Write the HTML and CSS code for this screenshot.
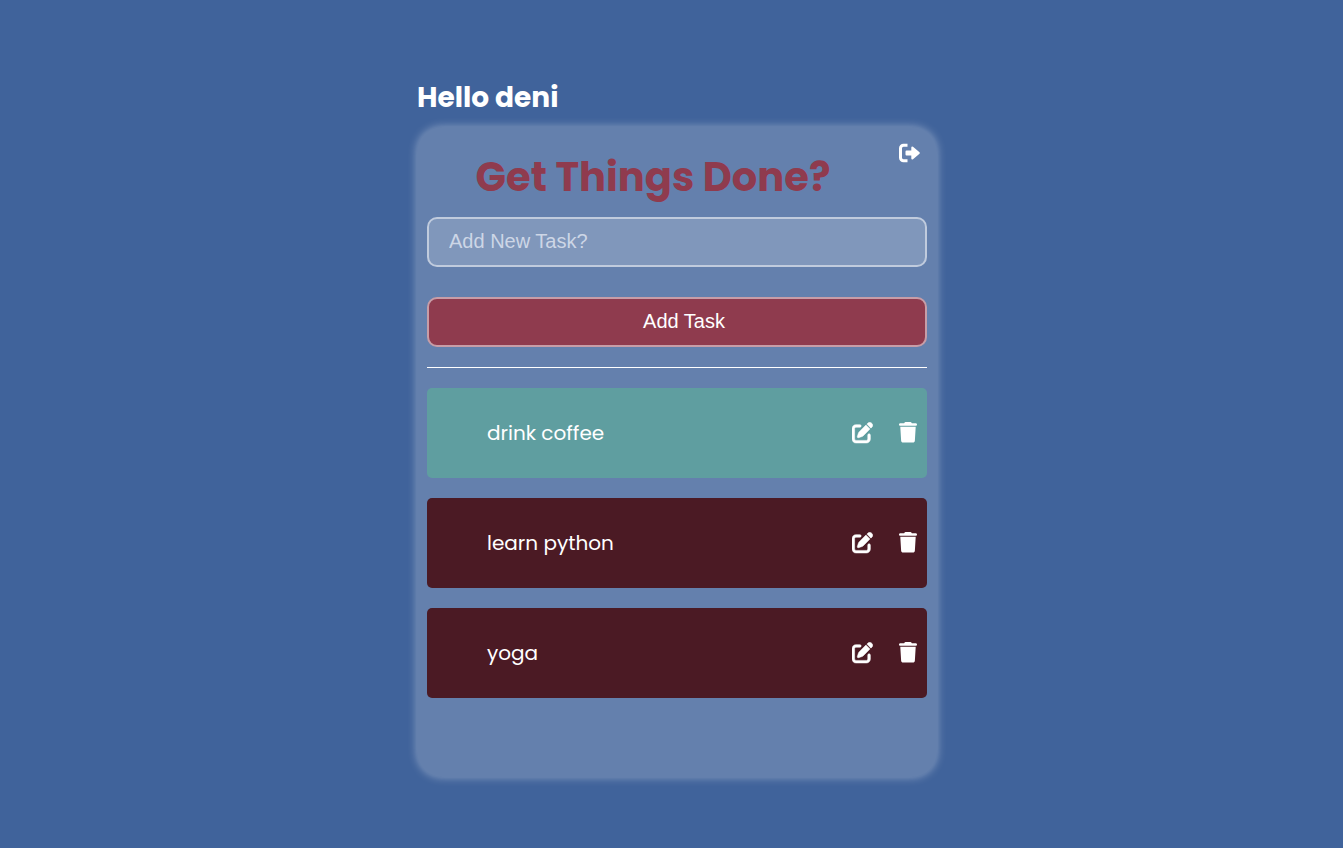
FILE: index.html
```html
<!DOCTYPE html>
<html lang="en">
<head>
<meta charset="utf-8">
<meta name="viewport" content="width=device-width, initial-scale=1">
<title>Get Things Done?</title>
<link rel="stylesheet" href="styles.css">
</head>
<body>
<svg class="sprite" aria-hidden="true">
  <symbol id="logout" viewBox="0 0 22 20">
    <path d="M8.500 2.300H4.500A3 3 0 0 0 1.500 5.300V14.700A3 3 0 0 0 4.500 17.700H8.500" fill="none" stroke="currentColor" stroke-width="3"/>
    <path d="M7.500 7.500H12.300V4.600Q12.500 3 14 3.800L20.500 9.300Q21.200 10 20.500 10.700L14 16.200Q12.500 17 12.300 15.400V12.500H7.500Q6.500 12.500 6.500 11.600V8.400Q6.500 7.500 7.500 7.500Z" fill="currentColor"/>
  </symbol>
  <symbol id="edit" viewBox="0 0 512 512" preserveAspectRatio="xMidYMin meet">
    <path fill="currentColor" d="M471.600 21.700c-21.900-21.900-57.300-21.900-79.200 0L362.300 51.700l97.900 97.900 30.100-30.100c21.900-21.900 21.900-57.300 0-79.200L471.600 21.700zm-299.200 220c-6.100 6.100-10.800 13.600-13.500 21.900l-29.600 88.800c-2.900 8.600-.6 18.100 5.800 24.600s15.900 8.700 24.600 5.800l88.800-29.600c8.200-2.700 15.700-7.400 21.900-13.500L437.700 172.300 339.700 74.300 172.400 241.700zM96 64C43 64 0 107 0 160V416c0 53 43 96 96 96H352c53 0 96-43 96-96V320c0-17.700-14.300-32-32-32s-32 14.300-32 32v96c0 17.700-14.300 32-32 32H96c-17.700 0-32-14.300-32-32V160c0-17.700 14.300-32 32-32h96c17.700 0 32-14.300 32-32s-14.300-32-32-32H96z" stroke="currentColor" stroke-width="12"/>
  </symbol>
  <symbol id="trash" viewBox="0 0 448 512" preserveAspectRatio="xMidYMin meet">
    <path fill="currentColor" d="M135.200 17.700L128 32H32C14.300 32 0 46.300 0 64S14.300 96 32 96H416c17.700 0 32-14.300 32-32s-14.300-32-32-32H320l-7.200-14.300C307.400 6.800 296.300 0 284.200 0H163.800c-12.100 0-23.200 6.800-28.600 17.700zM32 120L53.200 467c1.600 25.300 22.600 45 47.900 45H346.900c25.300 0 46.300-19.700 47.900-45L416 120H32z"/>
  </symbol>
</svg>
<main class="page">
  <h2 class="greeting">Hello deni</h2>
  <section class="card">
    <header class="card-header">
      <h1 class="title">Get Things Done?</h1>
      <button class="icon-button logout" type="button" aria-label="Log out"><svg class="icon-logout"><use href="#logout"/></svg></button>
    </header>
    <form class="task-form">
      <input class="field" type="text" placeholder="Add New Task?" aria-label="Add New Task?">
      <button class="submit" type="button">Add Task</button>
    </form>
    <ul class="tasks">
      <li class="task task-done">
        <span class="task-name">drink coffee</span>
        <button class="icon-button" type="button" aria-label="Edit drink coffee"><svg class="icon-edit"><use href="#edit"/></svg></button>
        <button class="icon-button" type="button" aria-label="Delete drink coffee"><svg class="icon-trash"><use href="#trash"/></svg></button>
      </li>
      <li class="task">
        <span class="task-name">learn python</span>
        <button class="icon-button" type="button" aria-label="Edit learn python"><svg class="icon-edit"><use href="#edit"/></svg></button>
        <button class="icon-button" type="button" aria-label="Delete learn python"><svg class="icon-trash"><use href="#trash"/></svg></button>
      </li>
      <li class="task">
        <span class="task-name">yoga</span>
        <button class="icon-button" type="button" aria-label="Edit yoga"><svg class="icon-edit"><use href="#edit"/></svg></button>
        <button class="icon-button" type="button" aria-label="Delete yoga"><svg class="icon-trash"><use href="#trash"/></svg></button>
      </li>
    </ul>
  </section>
</main>
</body>
</html>
```
FILE: styles.css
```css
* {
  box-sizing: border-box;
  margin: 0;
  padding: 0;
}

body {
  min-height: 100vh;
  padding-left: 11px;
  display: flex;
  align-items: center;
  justify-content: center;
  background: #40639b;
  color: #fff;
  font-family: Poppins, Inter, sans-serif;
}

.sprite {
  position: absolute;
  width: 0;
  height: 0;
}

.page {
  width: 100%;
  max-width: 520px;
}

.greeting {
  padding-bottom: 2px;
  font-size: 28px;
  line-height: 54px;
}

.card {
  min-height: 650px;
  padding: 10px;
  border-radius: 25px;
  background: rgba(255, 255, 255, 0.19);
  box-shadow: 0 0 10px rgba(255, 255, 255, 0.4);
}

.card-header {
  display: flex;
  align-items: flex-start;
}

.title {
  flex: 1;
  color: #8f3b4e;
  font-size: 40px;
  line-height: 80px;
  text-align: center;
}

.icon-button {
  display: flex;
  border: 0;
  background: none;
  color: #fff;
  cursor: pointer;
}

.logout {
  padding: 6px 6px 6px 20px;
}

.icon-logout {
  width: 22px;
  height: 20px;
}

.icon-edit {
  width: 21px;
  height: 22px;
}

.icon-trash {
  width: 18px;
  height: 22px;
}

.task-form {
  display: grid;
  gap: 30px;
  padding-bottom: 20px;
  border-bottom: 1px solid #fff;
}

.field,
.submit {
  width: 100%;
  height: 50px;
  padding: 0 6px 2px 20px;
  border: 2px solid rgba(255, 255, 255, 0.5);
  border-radius: 10px;
  color: #fff;
  font-family: "Liberation Sans", Arial, sans-serif;
  font-size: 20px;
}

.field {
  background: rgba(255, 255, 255, 0.18);
}

.field::placeholder {
  color: #cdd6e6;
}

.submit {
  background: #8f3b4e;
  cursor: pointer;
}

.tasks {
  display: grid;
  gap: 20px;
  padding-top: 20px;
  list-style: none;
}

.task {
  display: flex;
  align-items: center;
  gap: 26px;
  height: 90px;
  padding: 0 10px 0 60px;
  border-radius: 5px;
  background: #4b1a24;
}

.task-done {
  background: #5f9ea0;
}

.task-name {
  flex: 1;
  font-size: 20px;
}
```
